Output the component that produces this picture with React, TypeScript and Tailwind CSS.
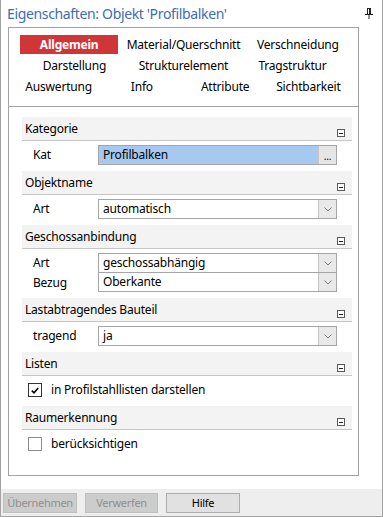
import React from "react";

const MinusBox = () => (
  <div className="absolute right-[7px] bottom-[3px] w-[8px] h-[8px] border border-[#5a5a5a] bg-white flex items-center justify-center">
    <div className="w-[4px] h-px bg-[#222]" />
  </div>
);

const Header = ({ title }: { title: string }) => (
  <div className="relative h-[24px] bg-[#f3f3f3] border-b border-[#c6c6c6] flex items-center pl-[3px] text-[12px] text-black">
    {title}
    <MinusBox />
  </div>
);

const Chevron = () => (
  <svg width="8" height="5" viewBox="0 0 8 5">
    <path d="M0.5 0.5 L4 4 L7.5 0.5" fill="none" stroke="#7a7a7a" strokeWidth="1" />
  </svg>
);

const Combo = ({ value, noTop }: { value: string; noTop?: boolean }) => (
  <div
    className={
      noTop
        ? "w-[239px] h-full flex border border-t-0 border-[#a5a5a5] bg-white"
        : "w-[239px] h-full flex border border-[#a5a5a5] bg-white"
    }
  >
    <div className="flex-1 flex items-center pl-[4px] text-[12px]">{value}</div>
    <div className="w-[18px] border-l border-[#c4c4c4] bg-[#e9e9e9] flex items-center justify-center">
      <Chevron />
    </div>
  </div>
);

const Row = ({ label, children, h = "h-[20px]" }: { label: string; children: React.ReactNode; h?: string }) => (
  <div className={`${h} flex`}>
    <div className="w-[76px] pl-[11px] flex items-center text-[12px]">{label}</div>
    {children}
  </div>
);

const CheckRow = ({ checked, label }: { checked?: boolean; label: string }) => (
  <div className="h-[20px] flex items-center">
    <div
      className={
        checked
          ? "ml-[6px] w-[14px] h-[14px] border border-[#333] bg-white flex items-center justify-center"
          : "ml-[6px] w-[14px] h-[14px] border border-[#8c8c8c] bg-white"
      }
    >
      {checked && (
        <svg width="8" height="7" viewBox="0 0 8 7">
          <path d="M0.8 3.6 L3 5.8 L7.2 1" fill="none" stroke="#000" strokeWidth="1.6" />
        </svg>
      )}
    </div>
    <span className="ml-[9px] text-[12px]">{label}</span>
  </div>
);

export default function App() {
  return (
    <div className="w-[383px] h-[517px] bg-white flex flex-col border-l border-r border-b border-[#a3a3a3] font-['Noto_Sans',sans-serif] tracking-[-0.2px] text-black overflow-hidden">
      {/* Title */}
      <div className="h-[27px] flex items-center pl-[6px] pr-[9px] shrink-0">
        <span className="text-[14px] tracking-[-0.35px] text-[#3c6eb4] leading-none">
          Eigenschaften: Objekt 'Profilbalken'
        </span>
        <div className="ml-auto">
          <svg width="8" height="11" viewBox="0 0 8 11">
            <path d="M2 0.5 H6 M2.5 0.5 V6 M5.5 0.5 V6 M4.5 1 V6" fill="none" stroke="#222" strokeWidth="1" />
            <path d="M0 6.5 H8" stroke="#222" strokeWidth="1" />
            <path d="M4 7 V11" stroke="#222" strokeWidth="1" />
          </svg>
        </div>
      </div>

      {/* Inner panel */}
      <div className="ml-[7px] w-[351px] h-[449px] border border-[#a3a3a3] shrink-0 flex flex-col">
        {/* tabs */}
        <div className="h-[79px] border-b border-[#a3a3a3] pt-[6px] px-[3px] text-[12px]">
          <div className="grid grid-cols-3 h-[21px] items-center">
            <div className="flex justify-center">
              <div className="w-[98px] h-[19px] bg-[#d03538] text-white font-bold flex items-center justify-center">
                Allgemein
              </div>
            </div>
            <div className="text-center">Material/Querschnitt</div>
            <div className="text-center">Verschneidung</div>
          </div>
          <div className="grid grid-cols-3 h-[21px] items-center mx-[8px]">
            <div className="text-center">Darstellung</div>
            <div className="text-center">Strukturelement</div>
            <div className="text-center">Tragstruktur</div>
          </div>
          <div className="grid grid-cols-4 h-[21px] items-center mx-[5px]">
            <div className="text-center">Auswertung</div>
            <div className="text-center">Info</div>
            <div className="text-center">Attribute</div>
            <div className="text-center">Sichtbarkeit</div>
          </div>
        </div>

        {/* sections */}
        <div className="ml-[13px] w-[330px] pt-[10px] flex flex-col">
          <Header title="Kategorie" />
          <div className="mt-[4px] mb-[6px]">
            <Row label="Kat">
              <div className="w-[239px] h-full flex border border-[#a5a5a5]">
                <div className="flex-1 bg-[#a7c9ef] flex items-center pl-[4px] text-[12px]">Profilbalken</div>
                <div className="w-[18px] border-l border-[#c4c4c4] bg-[#e6e6e6] flex items-end justify-center pb-[3px] text-[10px] leading-none">
                  ...
                </div>
              </div>
            </Row>
          </div>

          <Header title="Objektname" />
          <div className="mt-[4px] mb-[6px]">
            <Row label="Art">
              <Combo value="automatisch" />
            </Row>
          </div>

          <Header title="Geschossanbindung" />
          <div className="mt-[4px] mb-[6px]">
            <Row label="Art">
              <Combo value="geschossabhängig" />
            </Row>
            <Row label="Bezug" h="h-[19px]">
              <Combo value="Oberkante" noTop />
            </Row>
          </div>

          <Header title="Lastabtragendes Bauteil" />
          <div className="mt-[4px] mb-[6px]">
            <Row label="tragend">
              <Combo value="ja" />
            </Row>
          </div>

          <Header title="Listen" />
          <div className="mt-[4px] mb-[6px]">
            <CheckRow checked label="in Profilstahllisten darstellen" />
          </div>

          <Header title="Raumerkennung" />
          <div className="mt-[4px] mb-[6px]">
            <CheckRow label="berücksichtigen" />
          </div>
        </div>
      </div>

      <div className="h-[13px] shrink-0" />

      {/* footer */}
      <div className="flex-1 bg-[#eeeeee] flex items-start pt-[4px] pl-[2px] gap-[8px]">
        <div className="w-[74px] h-[20px] border border-[#bfbfbf] bg-[#cccccc] text-[#8f8f8f] text-[11px] tracking-[-0.3px] flex items-center justify-center">
          Übernehmen
        </div>
        <div className="w-[73px] h-[20px] border border-[#bfbfbf] bg-[#cccccc] text-[#8f8f8f] text-[11px] tracking-[-0.3px] flex items-center justify-center">
          Verwerfen
        </div>
        <div className="w-[74px] h-[20px] border border-[#adadad] bg-[#e1e1e1] text-black text-[11px] tracking-[-0.3px] flex items-center justify-center">
          Hilfe
        </div>
      </div>
    </div>
  );
}
